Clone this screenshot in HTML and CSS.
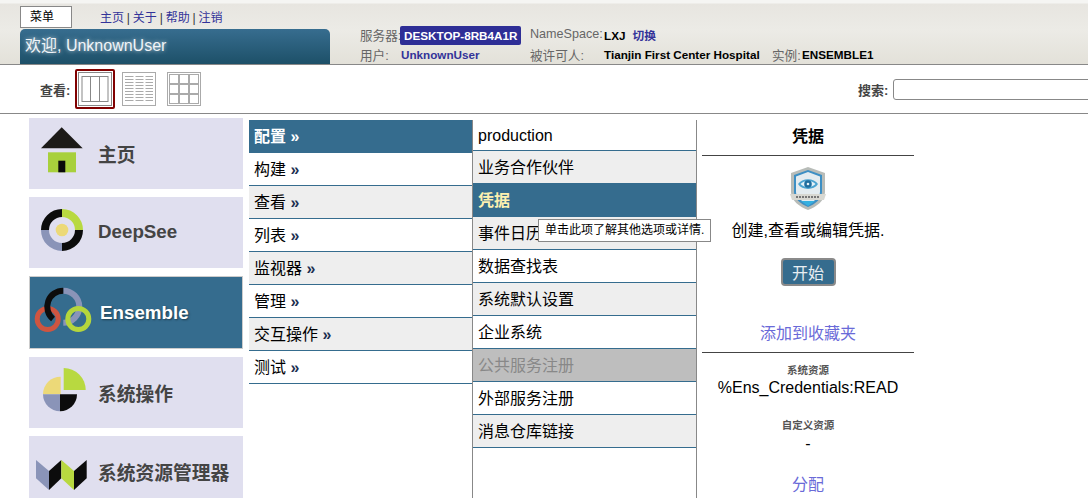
FILE: index.html
```html
<!DOCTYPE html>
<html lang="zh">
<head>
    <meta charset="UTF-8">
    <title>Ensemble 管理门户</title>
    <link rel="stylesheet" href="styles.css">
</head>
<body>
    <div class="header">
        <div class="header-left">
            <div class="header-top">
                <div class="menu-btn">菜单</div>
                <div class="header-links">
                    <a href="#">主页</a> | <a href="#">关于</a> | <a href="#">帮助</a> | <a href="#">注销</a>
                </div>
            </div>
            <div class="welcome">欢迎, UnknownUser</div>
        </div>
        <div class="header-info">
            <span class="info-label">服务器:</span>
            <span class="server-box">DESKTOP-8RB4A1R</span>
            <span class="info-label">NameSpace:</span>
            <span class="info-span"><b>LXJ</b><a class="switch" href="#">切换</a></span>
            <span class="info-label">用户:</span>
            <a class="user-link" href="#">UnknownUser</a>
            <span class="info-label">被许可人:</span>
            <b class="info-value">Tianjin First Center Hospital</b>
            <span class="info-label">实例:</span>
            <b class="info-value">ENSEMBLE1</b>
        </div>
    </div>

    <div class="toolbar">
        <div class="view-group">
            <span class="tool-label">查看:</span>
            <div class="view-selected">
                <svg class="view-icon" viewBox="0 0 34 34">
                    <rect x="0.5" y="0.5" width="33" height="33" fill="#fff" stroke="#888"/>
                    <rect x="4" y="4.5" width="26" height="25" fill="none" stroke="#888"/>
                    <path d="M12.5 4.5V29.5M21.5 4.5V29.5" stroke="#888"/>
                </svg>
            </div>
            <svg class="view-icon icon-list" viewBox="0 0 34 34">
                <rect x="0.5" y="0.5" width="33" height="33" fill="#fff" stroke="#aaa"/>
                <path d="M3 4.5H31M3 7.5H31M3 10.5H31M3 13.5H31M3 16.5H31M3 19.5H31M3 22.5H31M3 25.5H31M3 28.5H31" stroke="#aaa"/>
                <path d="M12.5 3V31M22.5 3V31" stroke="#fff" stroke-width="2"/>
            </svg>
            <svg class="view-icon icon-grid" viewBox="0 0 34 34" fill="none" stroke="#aaa">
                <rect x="0.5" y="0.5" width="33" height="33" fill="#fff"/>
                <rect x="2.5" y="2.5" width="9" height="9"/>
                <rect x="12.5" y="2.5" width="9" height="9"/>
                <rect x="22.5" y="2.5" width="9" height="9"/>
                <rect x="2.5" y="12.5" width="9" height="9"/>
                <rect x="12.5" y="12.5" width="9" height="9"/>
                <rect x="22.5" y="12.5" width="9" height="9"/>
                <rect x="2.5" y="22.5" width="9" height="9"/>
                <rect x="12.5" y="22.5" width="9" height="9"/>
                <rect x="22.5" y="22.5" width="9" height="9"/>
            </svg>
        </div>
        <label class="search">
            <span class="tool-label">搜索:</span>
            <input class="search-input" type="text">
        </label>
    </div>

    <div class="main">
        <div class="tiles">
            <div class="tile tile-cjk">
                <svg class="tile-icon" viewBox="0 0 60 60">
                    <path d="M27.7 5.3L48.7 26.3H7Z" fill="#1c1a18"/>
                    <rect x="14" y="30.3" width="28" height="20" fill="#a8d03c"/>
                    <rect x="24.3" y="38.7" width="7" height="11.6" fill="#0a0a0a"/>
                </svg>
                <span>主页</span>
            </div>
            <div class="tile">
                <svg class="tile-icon" viewBox="0 0 60 60" fill="none" stroke-width="8">
                    <path d="M28 12A17 17 0 0 0 11 29" stroke="#0c0c0c"/>
                    <path d="M28 12A17 17 0 0 1 45 29" stroke="#b8d940"/>
                    <path d="M45 29A17 17 0 0 1 28 46" stroke="#0c0c0c"/>
                    <path d="M28 46A17 17 0 0 1 11 29" stroke="#8a94b8"/>
                    <circle cx="28" cy="29" r="6.3" fill="#ecd978" stroke="none"/>
                </svg>
                <span>DeepSee</span>
            </div>
            <div class="tile tile-active">
                <svg class="tile-icon" viewBox="0 0 60 60" fill="none">
                    <path d="M29.3 9.7A16 16 0 0 1 29.3 41.7" stroke="#8a94b8" stroke-width="6"/>
                    <circle cx="13.7" cy="38" r="10.5" stroke="#cf5540" stroke-width="5"/>
                    <circle cx="44.3" cy="38" r="10.5" stroke="#b5d63c" stroke-width="5"/>
                    <path d="M29.3 9.7A16 16 0 0 0 19 38" stroke="#0c0c0c" stroke-width="6"/>
                </svg>
                <span>Ensemble</span>
            </div>
            <div class="tile tile-cjk">
                <svg class="tile-icon" viewBox="0 0 60 60">
                    <path d="M29.7 29V7A22 22 0 0 1 51.7 29Z" fill="#b8d940"/>
                    <path d="M26.7 33.3H9A17.5 17.5 0 0 1 26.7 15.8Z" fill="#ecd978"/>
                    <path d="M26 33.3V50.3A17 17 0 0 1 9 33.3Z" fill="#8a94b8"/>
                    <path d="M26 33.3H43A17 17 0 0 1 26 50.3Z" fill="#0c0c0c"/>
                </svg>
                <span>系统操作</span>
            </div>
            <div class="tile tile-cjk">
                <svg class="tile-icon" viewBox="0 0 60 60">
                    <path d="M2 20L15 31V50L2 38.3Z" fill="#8a94b8"/>
                    <path d="M15 31L27.3 20V38.3L15 50Z" fill="#0c0c0c"/>
                    <path d="M27.3 20L40 31V50L27.3 38.3Z" fill="#b8d940"/>
                    <path d="M40 31L52.7 20V38.3L40 50Z" fill="#0c0c0c"/>
                </svg>
                <span>系统资源管理器</span>
            </div>
        </div>

        <div class="col-menu">
            <div class="row row-selected">配置 <b class="arrow">»</b></div>
            <div class="row">构建 <b class="arrow">»</b></div>
            <div class="row row-alt">查看 <b class="arrow">»</b></div>
            <div class="row">列表 <b class="arrow">»</b></div>
            <div class="row row-alt">监视器 <b class="arrow">»</b></div>
            <div class="row">管理 <b class="arrow">»</b></div>
            <div class="row row-alt">交互操作 <b class="arrow">»</b></div>
            <div class="row">测试 <b class="arrow">»</b></div>
        </div>

        <div class="col-options">
            <div class="row row-first">production</div>
            <div class="row row-alt">业务合作伙伴</div>
            <div class="row row-current">凭据</div>
            <div class="row row-alt">事件日历</div>
            <div class="row">数据查找表</div>
            <div class="row row-alt">系统默认设置</div>
            <div class="row">企业系统</div>
            <div class="row row-disabled">公共服务注册</div>
            <div class="row">外部服务注册</div>
            <div class="row row-alt">消息仓库链接</div>
            <div class="tooltip">单击此项了解其他选项或详情.</div>
        </div>

        <div class="detail">
            <div class="detail-title">凭据</div>
            <svg class="shield" viewBox="0 0 36 44">
                <path d="M18 0L35 6V25C35 34 26 40 18 43C10 40 1 34 1 25V6Z" fill="#b8bcb8"/>
                <path d="M18 3L32 8V25C32 32 25 37 18 40C11 37 4 32 4 25V8Z" fill="#3d8fc4"/>
                <path d="M18 5L30 9.5V25C30 30 24 34 18 38C12 34 6 30 6 25V9.5Z" fill="#e4ecf0"/>
                <path d="M8 17C12 10.5 24 10.5 28 17C24 23.5 12 23.5 8 17Z" fill="#4aa3d0"/>
                <path d="M10.5 17C14 13 22 13 25.5 17C22 21 14 21 10.5 17Z" fill="#e4f2f8"/>
                <circle cx="18" cy="17" r="3.8" fill="#1f6d9e"/>
                <circle cx="18" cy="17" r="1.3" fill="#e4f2f8"/>
                <path d="M0 27H36L34 33H2Z" fill="#d8d8d2"/>
                <path d="M11 34H25L18 39Z" fill="#35b0e0"/>
                <path d="M6 30H30" stroke="#777" stroke-width="2" stroke-dasharray="2 1"/>
            </svg>
            <p class="detail-text">创建,查看或编辑凭据.</p>
            <button class="start-btn" type="button">开始</button>
            <a class="fav-link" href="#">添加到收藏夹</a>
            <div class="res-label res-system">系统资源</div>
            <div class="res-value">%Ens_Credentials:READ</div>
            <div class="res-label res-custom">自定义资源</div>
            <div class="res-value res-dash">-</div>
            <a class="assign-link" href="#">分配</a>
        </div>
    </div>
</body>
</html>
```

FILE: styles.css
```css
html, body {
    height: 100%;
    margin: 0;
    overflow: hidden;
}
body {
    font-family: "Liberation Sans", "Noto Sans CJK SC", sans-serif;
    font-size: 16px;
    color: #000;
    background: white;
}

/* header */
.header {
    display: flex;
    height: 64px;
    border-bottom: 1px solid #888;
    background: linear-gradient(#f5f5f3 0, #f5f5f3 3px, #e7e5e0 4px, #ecebe6 30px, #e3e1d9 64px);
}
.header-left {
    width: 310px;
    margin-left: 20px;
}
.header-top {
    display: flex;
    height: 29px;
    padding-top: 6px;
    box-sizing: border-box;
}
.menu-btn {
    width: 52px;
    height: 22px;
    box-sizing: border-box;
    padding-left: 9px;
    border: 1px solid #888;
    background: white;
    font-size: 12px;
    line-height: 20px;
}
.header-links {
    margin-left: 28px;
    font-size: 12px;
    line-height: 25px;
    word-spacing: -0.5px;
    color: #333;
}
.header-links a {
    color: #333399;
    text-decoration: none;
}
.welcome {
    height: 35px;
    box-sizing: border-box;
    padding-left: 5px;
    border-radius: 5px 5px 0 0;
    background: linear-gradient(#376d8f, #1d5068);
    color: #f0f4f8;
    font-size: 16px;
    line-height: 33px;
    text-shadow: 0 0 4px #c8d8e0;
}
.header-info {
    display: grid;
    grid-template-columns: 40px 130px 74px 168px 30px auto;
    grid-template-rows: 20px 20px;
    align-items: center;
    margin-left: 30px;
    padding-top: 25px;
    font-size: 11.7px;
}
.info-label {
    padding-bottom: 2px;
    font-size: 12.6px;
    color: #666;
    white-space: nowrap;
}
.info-value {
    padding-bottom: 2px;
}
.server-box {
    justify-self: start;
    padding: 0 4px;
    border-radius: 2px;
    background: #2e2e96;
    color: white;
    font-weight: bold;
    line-height: 19px;
}
.info-span {
    grid-column: span 3;
    padding-bottom: 2px;
}
.switch {
    margin-left: 7px;
    color: #333399;
    font-weight: bold;
    text-decoration: none;
}
.user-link {
    padding: 0 0 2px 1px;
    color: #333399;
    font-weight: bold;
    text-decoration: none;
}

/* toolbar */
.toolbar {
    display: flex;
    align-items: center;
    height: 48px;
    border-bottom: 1px solid #888;
    overflow: hidden;
}
.view-group {
    display: flex;
    align-items: center;
    flex: none;
    width: 818px;
    padding-left: 40px;
}
.tool-label {
    font-size: 13px;
    font-weight: bold;
    color: #444;
}
.view-selected {
    display: flex;
    margin-left: 5px;
    padding: 1px;
    border: 2px solid #800000;
    border-radius: 2px;
}
.view-icon {
    display: block;
    width: 34px;
    height: 34px;
}
.icon-list {
    margin-left: 7px;
}
.icon-grid {
    margin-left: 11px;
}
.search {
    display: flex;
    flex: none;
    align-items: center;
    gap: 5px;
}
.search-input {
    width: 220px;
    height: 21px;
    box-sizing: border-box;
    border: 1px solid #888;
    border-radius: 3px;
}

/* main columns */
.main {
    display: flex;
    height: 384px;
}
.tiles {
    display: flex;
    flex: none;
    flex-direction: column;
    gap: 8px;
    width: 214px;
    margin: 4px 0 0 29px;
}
.tile {
    display: flex;
    flex: none;
    height: 71px;
    box-sizing: border-box;
    padding: 4px 0 0 5px;
    background: #e0dfef;
    color: #444;
    font-size: 18.75px;
    font-weight: bold;
}
.tile span {
    margin-left: 4px;
    line-height: 62px;
}
.tile-cjk span {
    line-height: 67px;
}
.tile-icon {
    flex: none;
    width: 60px;
    height: 60px;
}
.tile-active {
    height: 73px;
    padding: 4px 0 0 4px;
    border: 1px solid #ccc;
    background: #356c8e;
    color: white;
    text-shadow: 1px 1px 2px #1d3f52;
}
.tile-active span {
    margin-left: 6px;
    line-height: 64px;
}
.col-menu, .col-options {
    flex: none;
    box-sizing: border-box;
    margin-top: 6px;
    border-right: 1px solid #888;
}
.col-menu {
    width: 224px;
    margin-left: 6px;
}
.col-options {
    position: relative;
    width: 224px;
}
.row {
    height: 33px;
    box-sizing: border-box;
    padding-left: 5px;
    border-bottom: 1px solid #356c8e;
    line-height: 34px;
}
.row-first {
    height: 31px;
    line-height: 32px;
}
.row-alt {
    background: #eeeeee;
}
.row-selected {
    background: #356c8e;
    color: white;
    font-weight: bold;
}
.row-current {
    background: #356c8e;
    color: #fdf0b0;
    font-weight: bold;
}
.row-disabled {
    background: #bebebe;
    color: #888;
}
.arrow {
    color: #1c2f50;
}
.row-selected .arrow {
    color: white;
}
.tooltip {
    position: absolute;
    top: 99px;
    left: 65px;
    padding: 0 6px;
    border: 1px solid #888;
    background: white;
    font-size: 12px;
    line-height: 21px;
    white-space: nowrap;
}

/* right detail panel */
.detail {
    display: flex;
    flex: none;
    flex-direction: column;
    align-items: center;
    width: 212px;
    margin: 6px 0 0 5px;
}
.detail-title {
    align-self: stretch;
    height: 35px;
    border-bottom: 1px solid #444;
    font-weight: bold;
    line-height: 33px;
    text-align: center;
}
.shield {
    width: 36px;
    height: 44px;
    margin-top: 11px;
}
.detail-text {
    margin: 10px 0 0;
    line-height: 20px;
}
.start-btn {
    width: 55px;
    height: 28px;
    margin-top: 17px;
    padding: 0;
    border: 2px solid #8a8a8a;
    border-radius: 4px;
    background: #356c8e;
    color: #e8eef2;
    font: 16px "Liberation Sans", "Noto Sans CJK SC", sans-serif;
}
.fav-link {
    align-self: stretch;
    height: 30px;
    margin-top: 36px;
    border-bottom: 1px solid #444;
    color: #6a6ad8;
    line-height: 24px;
    text-align: center;
    text-decoration: none;
}
.res-label {
    color: #555;
    font-size: 10.5px;
    font-weight: bold;
    line-height: 14px;
}
.res-system {
    margin-top: 10px;
}
.res-system + .res-value {
    margin-top: 1px;
}
.res-custom {
    margin-top: 20px;
}
.res-value {
    line-height: 20px;
}
.res-dash {
    margin-top: 2px;
}
.assign-link {
    margin-top: 21px;
    color: #6a6ad8;
    line-height: 20px;
    text-decoration: none;
}
```
